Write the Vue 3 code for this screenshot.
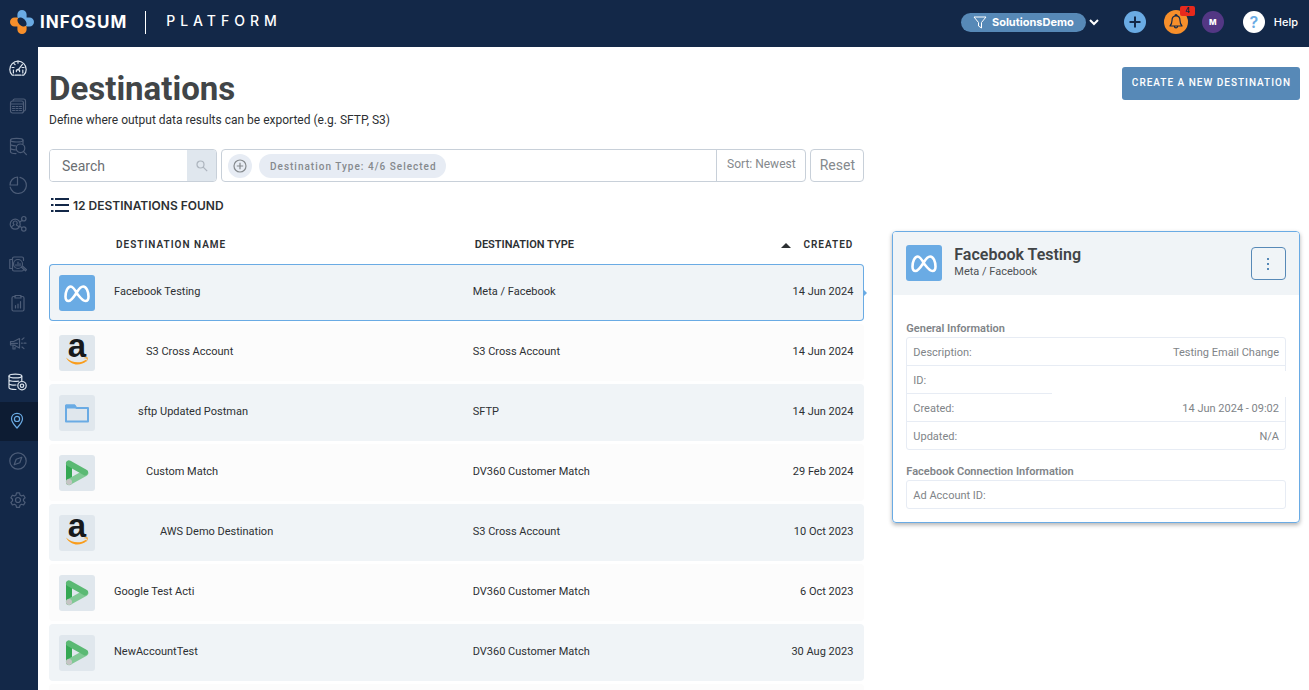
<script setup>
import { ref } from 'vue'

const search = ref('')

const nav = [
  { label: 'Dashboard', state: 'bright', paths: ['M5 17.2H3.2A8.2 8.2 0 1 1 14.8 17.2H13', 'M6.2 17.2h5.6', 'M9 3.2v2M3 9.5h2M4.8 5.3l1.3 1.3M13 9.5h2M9 12.2l4.4-5.8', 'M4.4 12v3M13.8 12v3M7.4 13.6a1.7 1.7 0 1 1 3.2 0'] },
  { label: 'Datasets', state: '', paths: ['M1.5 6a2 2 0 0 1 2-2h9a2 2 0 0 1 2 2v8a2 2 0 0 1-2 2h-9a2 2 0 0 1-2-2z', 'M4 3.8A2 2 0 0 1 5.5 2H14.5a2 2 0 0 1 2 2v8.5a2 2 0 0 1-1.8 1.7', 'M1.5 7h13M3.5 9.5h2M7 9.5h2M10.5 9.5h2M3.5 11.5h2M7 11.5h2M10.5 11.5h2M3.5 13.5h2M7 13.5h2M10.5 13.5h2'] },
  { label: 'Query', state: '', paths: ['M1.5 3.2C1.5 .8 14 .8 14 3.2S1.5 5.6 1.5 3.2', 'M1.5 3.2v11.6c0 1.2 2.5 1.8 5.5 1.8M14 3.2v3.5M1.5 7c0 1 2 1.7 5 1.8M1.5 11c0 1 2 1.7 5 1.8', 'M11.5 7a4.3 4.3 0 1 1 0 8.6 4.3 4.3 0 0 1 0-8.6M14.6 14.6l2.8 3'] },
  { label: 'Insights', state: '', paths: ['M8.5 1v8H1A8 8 0 0 1 8.5 1z', 'M11 1.3A8.2 8.2 0 1 1 1.2 11.2'] },
  { label: 'Identity', state: '', paths: ['M6.2 4.2a5 5 0 1 1 0 10 5 5 0 0 1 0-10', 'M6.2 6a1.9 1.9 0 0 1 1.3 3.4c-.6 1 2 1 2.3 2.6M6.2 6a1.9 1.9 0 0 0-1.3 3.4c.6 1-2 1-2.3 2.6', 'M14.8 1.5a2.2 2.2 0 1 1 0 4.4 2.2 2.2 0 0 1 0-4.4M14.8 11.8a2.2 2.2 0 1 1 0 4.4 2.2 2.2 0 0 1 0-4.4M10.8 7l2.2-1.5M10.8 11.2l2.2 1.5'] },
  { label: 'Explore', state: '', paths: ['M3.5 3.5a1.5 1.5 0 0 1 1.5-1.5h8a1.5 1.5 0 0 1 1.5 1.5v2M3.5 3.5v11a1.5 1.5 0 0 0 1.5 1.5h8a1.5 1.5 0 0 0 1.5-1.5', 'M3 4.5H.8v9H3', 'M9 4.5a4.5 4.5 0 1 1 0 9 4.5 4.5 0 0 1 0-9M7 11V9.5M9 11V7M11 11V8.5M12.5 12.2l4 3.6 1-1.2-3.8-3.4'] },
  { label: 'Reports', state: '', paths: ['M6 2.5H4.5A1.5 1.5 0 0 0 3 4v11.5A1.5 1.5 0 0 0 4.5 17h9a1.5 1.5 0 0 0 1.5-1.5V4a1.5 1.5 0 0 0-1.5-1.5H12', 'M6 1.5h6V4H6z', 'M6.5 14v-2.5M9 14v-4M11.5 14V7.5'] },
  { label: 'Activation', state: '', paths: ['M1.5 7.5v3.5h3.2L10.5 14V4.5L4.7 7.5zM4 11v4h2v-4M2.5 9.3h6', 'M12.5 9.2h.8M15 9.2h2M13 5.5l2-1.6M13 13l2 1.6'] },
  { label: 'Data access', state: 'bright', paths: ['M0 3C0 .4 12.8 .4 12.8 3S0 5.6 0 3', 'M0 3v11.5c0 1.4 3 2 7 2M12.8 3v5M0 6.8c0 1.5 6 2 9.5 1.3M0 10.6c0 1.3 4 1.7 7 1.4', 'M13 8.5a4.2 4.2 0 1 1 0 8.4 4.2 4.2 0 0 1 0-8.4M13 11a1.7 1.7 0 1 1 0 3.4 1.7 1.7 0 0 1 0-3.4'] },
  { label: 'Destinations', state: 'active', paths: ['M8 1.3c3.3 0 5.5 2.4 5.5 5.4 0 3.7-3.3 6.7-5.5 9.3C5.8 13.4 2.5 10.4 2.5 6.7 2.5 3.7 4.7 1.3 8 1.3z', 'M8 4.3a2.6 2.6 0 1 1 0 5.2 2.6 2.6 0 0 1 0-5.2'] },
  { label: 'Discover', state: '', paths: ['M9 .8a8.2 8.2 0 1 1 0 16.4A8.2 8.2 0 0 1 9 .8', 'M12.8 5.2l-2 5.6-5.6 2 2-5.6z'] },
  { label: 'Settings', state: '', paths: ['M7.5 1.8h3l.5 2.2 1.5.9 2.1-.7 1.5 2.6-1.6 1.5v1.6l1.6 1.5-1.5 2.6-2.1-.7-1.5.9-.5 2.2h-3L7 14.2l-1.5-.9-2.1.7-1.5-2.6 1.6-1.5V8.3L1.900 6.8l1.5-2.6 2.1.7L7 4z', 'M9 6.5a2.5 2.5 0 1 1 0 5 2.5 2.5 0 0 1 0-5'] },
]

const rows = [
  { icon: 'meta', name: 'Facebook Testing', indent: 0, type: 'Meta / Facebook', created: '14 Jun 2024', selected: true },
  { icon: 'amazon', name: 'S3 Cross Account', indent: 32, type: 'S3 Cross Account', created: '14 Jun 2024' },
  { icon: 'folder', name: 'sftp Updated Postman', indent: 24, type: 'SFTP', created: '14 Jun 2024' },
  { icon: 'dv360', name: 'Custom Match', indent: 32, type: 'DV360 Customer Match', created: '29 Feb 2024' },
  { icon: 'amazon', name: 'AWS Demo Destination', indent: 46, type: 'S3 Cross Account', created: '10 Oct 2023' },
  { icon: 'dv360', name: 'Google Test Acti', indent: 0, type: 'DV360 Customer Match', created: '6 Oct 2023' },
  { icon: 'dv360', name: 'NewAccountTest', indent: 0, type: 'DV360 Customer Match', created: '30 Aug 2023' },
  { icon: '', name: '', indent: 0, type: '', created: '' },
]

const general = [
  { label: 'Description:', value: 'Testing Email Change' },
  { label: 'ID:', value: '', hidden: true },
  { label: 'Created:', value: '14 Jun 2024 - 09:02' },
  { label: 'Updated:', value: 'N/A' },
]
</script>

<template>
  <div class="app">
    <header class="topbar">
      <svg class="mark" viewBox="0 0 24 24" aria-hidden="true">
        <path d="M12 0a4.600 4.600 0 0 1 4.600 4.600v2.800h2.800a4.600 4.600 0 0 1 0 9.200h-2.800L7.400 7.400V4.600A4.600 4.600 0 0 1 12 0z" fill="#6aabe4" />
        <path d="M7.400 7.400H4.600a4.600 4.600 0 0 0 0 9.200h2.800v2.800a4.600 4.600 0 0 0 9.200 0v-2.800z" fill="#f78f2b" />
        <ellipse cx="12" cy="12" rx="5.400" ry="3.600" transform="rotate(45 12 12)" fill="#132848" />
      </svg>
      <span class="brand">INFOSUM</span>
      <span class="divider"></span>
      <span class="product">PLATFORM</span>
      <div class="tools">
        <button class="account" type="button">
          <svg width="14" height="13" viewBox="0 0 14 13" fill="none" stroke="currentColor"><path d="M1 1h12L8.500 6.500V12l-3-2V6.500z" /></svg>
          SolutionsDemo
        </button>
        <button class="chevron" type="button" aria-label="Switch account">
          <svg width="10" height="7" viewBox="0 0 10 7" fill="none" stroke="#fff" stroke-width="2"><path d="M1 1l4 4 4-4" /></svg>
        </button>
        <button class="round add" type="button" aria-label="Add">
          <svg width="22" height="22" viewBox="0 0 22 22" stroke="#132848" stroke-width="2"><path d="M11 5.500v11M5.500 11h11" /></svg>
        </button>
        <button class="round bell" type="button" aria-label="Notifications">
          <svg width="24" height="24" viewBox="0 0 24 24" fill="none" stroke="#132848" stroke-width="1.200" stroke-linejoin="round"><path d="M12 5.800c2.800 0 4 2 4 4.600 0 3 .8 4.200 2 5.600H6c1.200-1.400 2-2.600 2-5.600 0-2.600 1.200-4.600 4-4.600zM11 5.500a1 1 0 0 1 2 0M10.400 16.300a1.600 1.600 0 0 0 3.200 0" /></svg>
          <span class="count">4</span>
        </button>
        <button class="round user" type="button">M</button>
        <a class="help" href="#"><span class="round question">?</span>Help</a>
      </div>
    </header>

    <div class="body">
      <nav class="sidebar">
        <div class="menu">
          <a v-for="item in nav" :key="item.label" href="#" :class="item.state" :aria-label="item.label">
            <svg width="18" height="18" viewBox="0 0 18 18" fill="none" stroke="currentColor" stroke-width="1.200" stroke-linecap="round" stroke-linejoin="round">
              <path v-for="d in item.paths" :key="d" :d="d" />
            </svg>
          </a>
        </div>
      </nav>

      <main>
        <div class="heading">
          <div>
            <h1>Destinations</h1>
            <p>Define where output data results can be exported (e.g. SFTP, S3)</p>
          </div>
          <button class="create" type="button">CREATE A NEW DESTINATION</button>
        </div>

        <div class="columns">
          <section>
            <div class="filters">
              <form class="search" @submit.prevent>
                <input v-model="search" type="text" placeholder="Search" aria-label="Search" />
                <button type="submit" aria-label="Search">
                  <svg width="12" height="12" viewBox="0 0 12 12" fill="none" stroke="currentColor" stroke-width="1.200"><circle cx="4.500" cy="4.500" r="3.500" /><path d="M7.200 7.200l4 4" /></svg>
                </button>
              </form>
              <div class="filterbox">
                <button class="addfilter" type="button" aria-label="Add filter">
                  <svg width="14" height="14" viewBox="0 0 14 14" fill="none" stroke="currentColor" stroke-width="1.200"><circle cx="7" cy="7" r="6" /><path d="M7 3.800v6.400M3.800 7h6.400" /></svg>
                </button>
                <button class="chip" type="button">Destination Type: 4/6 Selected</button>
                <button class="sort" type="button">Sort: Newest</button>
              </div>
              <button class="reset" type="button">Reset</button>
            </div>

            <h2>
              <svg width="18" height="14" viewBox="0 0 18 14" stroke="#132848" stroke-width="2" aria-hidden="true"><path d="M4 1h14M4 7h14M4 13h14" /><path d="M0 1h2.500M0 7h2.500M0 13h2.500" /></svg>
              12 DESTINATIONS FOUND
            </h2>

            <table>
              <colgroup><col class="c-icon" /><col class="c-name" /><col class="c-type" /><col /></colgroup>
              <thead>
                <tr>
                  <th></th>
                  <th class="spaced">DESTINATION NAME</th>
                  <th>DESTINATION TYPE</th>
                  <th class="date spaced"><span class="caret"></span>CREATED</th>
                </tr>
              </thead>
              <tbody>
                <tr v-for="(row, i) in rows" :key="i" :class="{ selected: row.selected }">
                  <td>
                    <span v-if="row.icon" class="tile" :class="row.icon">
                      <svg v-if="row.icon === 'meta'" viewBox="0 0 36 36"><path d="M18 18.500C15.500 14 14 11.500 11.800 11.500 8.500 11.500 6.500 17 6.500 21.500c0 3 1.200 4.500 3 4.500 3 0 5.500-4.500 8.500-9 1.800-3 3.500-5.500 6.200-5.500 3.300 0 5.300 5.500 5.300 10 0 3-1.200 4.500-3 4.500-3 0-5-3-8.500-7.500z" fill="none" stroke="#fff" stroke-width="2.600" /></svg>
                      <svg v-else-if="row.icon === 'amazon'" viewBox="0 0 36 36">
                        <text x="18" y="22" text-anchor="middle" class="amz">a</text>
                        <path d="M7 22.500c6.500 6 14.500 6 20 2.200l.8 1c-6 5.600-16 5.400-20.800-3.200z" fill="#f99d1c" />
                        <path d="M24.500 23.200c1.500-1.200 3.500-1 4.200-.6.200 1.500-.2 3.300-1.400 4.400.4-1.300.8-2.600.5-3.200-.6-.6-2-.6-3.300-.6z" fill="#f99d1c" />
                      </svg>
                      <svg v-else-if="row.icon === 'folder'" viewBox="0 0 36 36"><path d="M7 10.500h8.500l2 2.500H29v13.500H7z" fill="none" stroke="#6aabe4" stroke-width="2" stroke-linejoin="round" /><path d="M7 9.500h9l2 4H7z" fill="#6aabe4" /></svg>
                      <svg v-else viewBox="0 0 36 36" fill="none" stroke-width="6" stroke-linecap="round">
                        <path d="M10 9v18" stroke="#34a853" />
                        <path d="M10 27l16.300-9" stroke="#81c995" />
                        <path d="M10 8.300L26 17.300" stroke="#5bb974" />
                        <circle cx="10" cy="27" r="3" fill="#c4c4c4" stroke="none" />
                      </svg>
                    </span>
                  </td>
                  <td><span :style="{ paddingLeft: row.indent + 'px' }">{{ row.name }}</span></td>
                  <td>{{ row.type }}</td>
                  <td class="date">{{ row.created }}</td>
                </tr>
              </tbody>
            </table>
          </section>

          <aside>
            <div class="card">
              <div class="cardhead">
                <span class="tile meta">
                  <svg viewBox="0 0 36 36"><path d="M18 18.500C15.500 14 14 11.500 11.800 11.500 8.500 11.500 6.500 17 6.500 21.500c0 3 1.200 4.500 3 4.500 3 0 5.500-4.500 8.500-9 1.800-3 3.500-5.500 6.200-5.500 3.300 0 5.300 5.500 5.300 10 0 3-1.200 4.500-3 4.500-3 0-5-3-8.500-7.500z" fill="none" stroke="#fff" stroke-width="2.600" /></svg>
                </span>
                <div class="cardtitle">
                  <h3>Facebook Testing</h3>
                  <p>Meta / Facebook</p>
                </div>
                <button class="more" type="button" aria-label="More actions">
                  <svg width="2" height="12" viewBox="0 0 2 12" fill="#5789b7"><path d="M0 0h2v2H0zM0 5h2v2H0zM0 10h2v2H0z" /></svg>
                </button>
              </div>
              <div class="details">
                <h4>General Information</h4>
                <dl>
                  <div v-for="item in general" :key="item.label" :class="{ hidden: item.hidden }">
                    <dt>{{ item.label }}</dt>
                    <dd>{{ item.value }}</dd>
                  </div>
                </dl>
                <h4>Facebook Connection Information</h4>
                <dl>
                  <div><dt>Ad Account ID:</dt><dd></dd></div>
                </dl>
              </div>
            </div>
          </aside>
        </div>
      </main>
    </div>
  </div>
</template>

<style>
body {
  margin: 0;
  overflow: hidden;
}
</style>

<style scoped>
.app {
  display: flex;
  flex-direction: column;
  height: 100vh;
  font-family: Roboto, "Liberation Sans", sans-serif;
  font-size: 11px;
  color: #2d3033;
  background: #fff;
}
* { box-sizing: border-box; }
h1, h2, h3, h4, p, dl, dd { margin: 0; }
button, input { font: inherit; color: inherit; }
button { padding: 0; border: 0; background: none; cursor: pointer; }
a { color: inherit; text-decoration: none; }
svg { display: block; flex: none; overflow: visible; }

.topbar {
  display: flex;
  align-items: center;
  flex: none;
  height: 47px;
  padding: 0 11px 3px 10px;
  background: #132848;
  color: #fff;
  font-family: Inter, "Liberation Sans", sans-serif;
}
.mark { width: 24px; height: 24px; }
.brand { margin-left: 6px; font-size: 17px; font-weight: 700; letter-spacing: 1px; }
.divider { width: 1px; height: 23px; margin: 0 20px 0 18px; background: #fff; }
.product { font-size: 14px; line-height: 16px; padding-bottom: 2px; font-weight: 500; letter-spacing: 5px; }
.tools { display: flex; align-items: center; margin-left: auto; }
.account {
  display: flex;
  align-items: center;
  gap: 5px;
  height: 19px;
  padding: 0 12px;
  border-radius: 10px;
  background: #5789b7;
  font-weight: 700;
}
.chevron { margin: 0 25px 0 3px; }
.round {
  position: relative;
  display: flex;
  align-items: center;
  justify-content: center;
  width: 22px;
  height: 22px;
  border-radius: 50%;
}
.add { background: #6aabe4; }
.bell { width: 24px; height: 24px; margin: 0 14px 0 18px; background: #f78f2b; }
.count {
  position: absolute;
  top: -4px;
  right: -7px;
  width: 15px;
  height: 10px;
  border-radius: 2px;
  background: #e8291c;
  color: #132848;
  font-size: 7px;
  line-height: 10px;
  font-weight: 700;
}
.user { background: #533784; font-size: 8px; font-weight: 800; }
.help { display: flex; align-items: center; gap: 9px; margin-left: 19px; font-weight: 500; }
.question { background: #fff; color: #6aabe4; font-size: 16px; font-weight: 600; }

.body { display: flex; flex: 1; min-height: 0; }
.sidebar { flex: none; width: 38px; background: #132848; }
.menu { display: grid; grid-template-rows: repeat(12, 1fr); height: 473px; }
.menu a {
  display: flex;
  align-items: center;
  padding-left: 9px;
  color: #4d5d78;
}
.menu .bright { color: #dbe3ec; }
.menu .active { background: #0d1c33; color: #6aabe4; }

main { flex: 1; min-width: 0; padding: 20px 9px 0 11px; overflow: hidden; }
.heading { display: flex; justify-content: space-between; align-items: flex-start; height: 82px; }
h1 { font-size: 33px; line-height: 44px; font-weight: 700; color: #414547; }
.heading p { font-size: 12px; line-height: 18px; }
.create {
  height: 33px;
  padding: 0 9px 2px 10px;
  border-radius: 3px;
  background: #5789b7;
  color: #fff;
  font-size: 10px;
  font-weight: 500;
  letter-spacing: 1px;
}
.columns { display: grid; grid-template-columns: 2fr 1fr; gap: 28px; }
section { min-width: 0; }

.filters { display: flex; gap: 4px; height: 33px; color: #85898d; }
.search, .filterbox, .reset { border: 1px solid #c8d0d9; border-radius: 4px; }
.search { display: flex; width: 168px; overflow: hidden; }
.search input { flex: 1; min-width: 0; padding: 0 12px; border: 0; outline: 0; font-size: 14px; background: #fff; }
.search input::placeholder { color: #6b6f73; opacity: 1; }
.search button { display: flex; align-items: center; justify-content: center; width: 29px; background: #e0e7ee; color: #adb5be; }
.filterbox { display: flex; flex: 1; align-items: center; padding-left: 6px; }
.addfilter { display: flex; align-items: center; justify-content: center; width: 24px; height: 24px; border-radius: 50%; background: #e7ecf4; }
.chip { height: 24px; margin-left: 7px; padding: 1px 9px 0 11px; border-radius: 12px; background: #e7ecf4; font-size: 10px; font-weight: 500; letter-spacing: 1px; }
.sort { align-self: stretch; width: 89px; margin-left: auto; padding-bottom: 3px; border-left: 1px solid #c8d0d9; font-size: 12px; }
.reset { width: 54px; padding-bottom: 2px; font-size: 14px; }

h2 { display: flex; align-items: center; gap: 4px; height: 44px; padding: 2px 0 0 2px; font-family: Inter, "Liberation Sans", sans-serif; font-size: 12px; font-weight: 600; }

table { width: 100%; border-collapse: separate; border-spacing: 0 3px; table-layout: fixed; }
.c-icon { width: 65px; }
.c-name { width: 44%; }
.c-type { width: 24%; }
th { height: 32px; padding: 0 0 1px 2px; text-align: left; font-size: 11px; font-weight: 600; }
th.date { padding-right: 11px; }
th.spaced { font-size: 10px; letter-spacing: 1px; }
.date { text-align: right; white-space: nowrap; }
.caret { display: inline-block; margin-right: 12px; border: 5px solid transparent; border-top: 0; border-bottom-color: #2d3033; vertical-align: middle; }
td { height: 57px; padding: 0 0 3px; border: 1px solid transparent; border-width: 1px 0; background: #fcfcfc; }
td.date { padding-right: 10px; border-right-width: 1px; position: relative; }
td:first-child { padding: 0 0 0 9px; border-left-width: 1px; border-radius: 4px 0 0 4px; }
td:last-child { border-radius: 0 4px 4px 0; }
tr:nth-child(odd) td { background: #f0f4f7; }
.selected td { border-color: #6aabe4; }
.selected td:last-child::after {
  content: "";
  position: absolute;
  top: 24px;
  right: -4px;
  border: 4px solid transparent;
  border-right: 0;
  border-left-color: #6aabe4;
}
.tile { display: block; width: 36px; height: 36px; border-radius: 3px; background: #e0e7ed; flex: none; }
.tile.meta { background: #6aabe4; }
.amz { font-family: "Liberation Sans", sans-serif; font-size: 33px; font-weight: 700; fill: #17191b; }

aside { min-width: 0; padding-top: 82px; }
.card { border: 1px solid #6aabe4; border-radius: 4px; box-shadow: 0 2px 4px rgba(0, 0, 0, 0.3); overflow: hidden; }
.cardhead { display: flex; align-items: flex-start; height: 63px; padding: 13px; background: #f0f4f7; }
.cardtitle { margin-left: 12px; }
h3 { font-size: 16px; line-height: 20px; font-weight: 600; color: #414547; }
.cardtitle p { line-height: 14px; color: #4d5154; }
.more { display: flex; align-items: center; justify-content: center; width: 35px; height: 33px; margin: 2px 0 0 auto; border: 1px solid #5789b7; border-radius: 4px; }
.details { padding: 25px 13px 13px; color: #808488; }
h4 { font-size: 11px; line-height: 17px; font-weight: 600; }
dl { border: 1px solid #e7ecf4; border-radius: 3px; }
dl + h4 { margin-top: 13px; }
dl div { position: relative; display: flex; justify-content: space-between; align-items: center; height: 28px; padding: 2px 6px 0; border-bottom: 1px solid #e7ecf4; }
dl div:last-child { height: 27px; border-bottom: 0; }
.hidden::after { content: ""; position: absolute; top: 5px; right: -1px; bottom: -4px; width: 62%; background: #fff; }
</style>
